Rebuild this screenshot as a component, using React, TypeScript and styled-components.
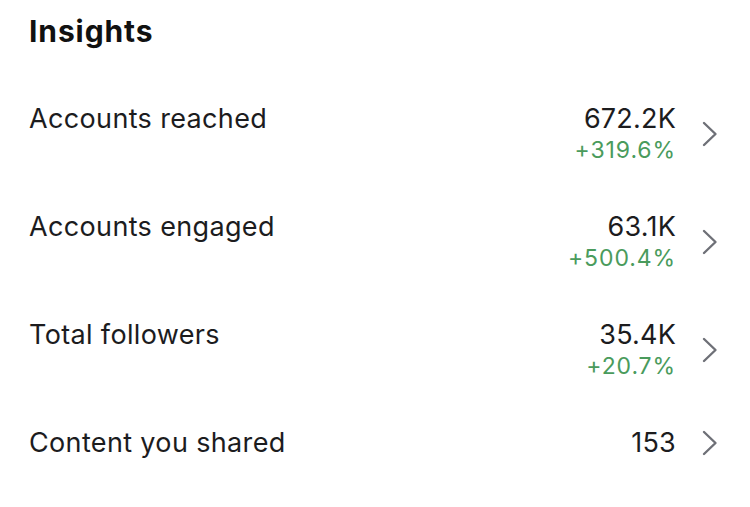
import React from "react";
import styled, { createGlobalStyle } from "styled-components";

const Global = createGlobalStyle`
  html, body { margin: 0; padding: 0; background: #ffffff; }
  body { font-family: Inter, "Noto Sans", "Liberation Sans", sans-serif; color: #1c1c1e; -webkit-font-smoothing: antialiased; }
`;

const Page = styled.div`
  width: 750px;
  height: 507px;
  box-sizing: border-box;
  padding: 12px 0 0 29px;
  background: #ffffff;
  overflow: hidden;
`;

const Title = styled.h1`
  margin: 0;
  font-size: 30px;
  line-height: 38px;
  font-weight: 700;
  letter-spacing: 0.9px;
  color: #111111;
`;

const List = styled.div`
  margin-top: 53px;
  display: flex;
  flex-direction: column;
`;

const Row = styled.div`
  display: flex;
  align-items: flex-start;
  height: 108px;
  padding-right: 32px;
`;

const Label = styled.div`
  flex: 1;
  font-size: 27px;
  line-height: 32px;
  color: #1c1c1e;
  letter-spacing: 0.35px;
`;

const Right = styled.div`
  display: flex;
  align-items: center;
  gap: 26px;
`;

const Values = styled.div`
  display: flex;
  flex-direction: column;
  align-items: flex-end;
`;

const Value = styled.div`
  font-size: 27px;
  line-height: 32px;
  letter-spacing: 0.2px;
  color: #1c1c1e;
`;

const Change = styled.div`
  font-size: 23px;
  line-height: 30px;
  letter-spacing: 0.9px;
  color: #4a9b5c;
`;

const Chevron = () => (
  <svg width="16" height="26" viewBox="0 0 16 26" fill="none">
    <path d="M2 2 L13.5 13 L2 24" stroke="#6e7077" strokeWidth="2.4" strokeLinecap="round" strokeLinejoin="round" />
  </svg>
);

const rows = [
  { label: "Accounts reached", value: "672.2K", change: "+319.6%" },
  { label: "Accounts engaged", value: "63.1K", change: "+500.4%" },
  { label: "Total followers", value: "35.4K", change: "+20.7%" },
  { label: "Content you shared", value: "153" },
];

export default function App() {
  return (
    <Page>
      <Global />
      <Title>Insights</Title>
      <List>
        {rows.map((r) => (
          <Row key={r.label}>
            <Label>{r.label}</Label>
            <Right>
              <Values>
                <Value>{r.value}</Value>
                {r.change && <Change>{r.change}</Change>}
              </Values>
              <Chevron />
            </Right>
          </Row>
        ))}
      </List>
    </Page>
  );
}
